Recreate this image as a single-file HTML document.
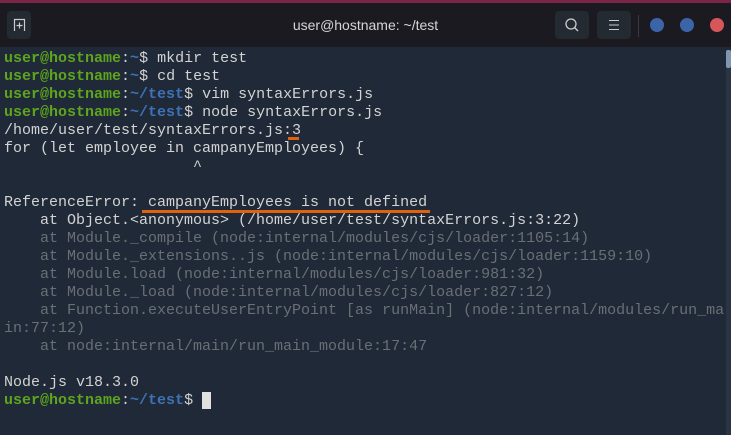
<!DOCTYPE html><html><head><style>
body{margin:0;width:731px;height:435px;overflow:hidden;background:#1f2937;font-family:"Liberation Mono",monospace}
.top{position:absolute;left:0;top:0;width:731px;height:4px;background:#7a2448}
.tb{position:absolute;left:0;top:3px;width:731px;height:44px;background:#1b1a21}
.btn{position:absolute;top:8px;height:28px;background:#232a31;border-radius:4px}
.title{position:absolute;left:0;width:731px;top:14px;text-align:center;color:#d6d6d6;font:14px "Liberation Sans",sans-serif}
.dot{position:absolute;top:15px;width:14px;height:14px;border-radius:50%}
.term{position:absolute;left:4px;top:50px;font-size:15px;line-height:18px;color:#d3d3d3;white-space:pre}
.g{color:#5ea51e;font-weight:bold}.b{color:#3e72b4;font-weight:bold}.d{color:#6a6f76}
.ul{position:absolute;height:3px;background:#e0620f}
</style></head><body>
<div class="top"></div>
<div class="tb">
<div class="btn" style="left:7px;width:24px"></div>
<svg style="position:absolute;left:13px;top:15px" width="13" height="14"><path d="M1.5 13V1.5H11.5V13M6.5 4.5V10.5M3.5 7.5H9.5" stroke="#ccc" stroke-width="1.2" fill="none"/></svg>
<div class="title">user@hostname: ~/test</div>
<div class="btn" style="left:555px;width:34px"></div>
<svg style="position:absolute;left:564px;top:14px" width="16" height="16"><circle cx="7" cy="7" r="5" stroke="#ccc" stroke-width="1.3" fill="none"/><path d="M10.5 10.5L14 14" stroke="#ccc" stroke-width="1.3"/></svg>
<div class="btn" style="left:597px;width:34px"></div>
<svg style="position:absolute;left:608px;top:16px" width="12" height="12"><path d="M1 1.5H11M1 6H11M1 10.5H11" stroke="#ccc" stroke-width="1.1"/></svg>
<div style="position:absolute;left:638px;top:12px;width:1px;height:22px;background:#3a3a40"></div>
<div class="dot" style="left:650px;background:#3b65a8"></div>
<div class="dot" style="left:680px;background:#3b65a8"></div>
<div class="dot" style="left:710px;background:#d5575a"></div>
</div>
<div style="position:absolute;left:726px;top:50px;width:5px;height:385px;background:#2a3442"></div>
<div style="position:absolute;left:726px;top:50px;width:5px;height:18px;background:#7f95b0;border-radius:2px"></div>
<div class="term"><span class="g">user@hostname</span>:<span class="b">~</span>$ mkdir test
<span class="g">user@hostname</span>:<span class="b">~</span>$ cd test
<span class="g">user@hostname</span>:<span class="b">~/test</span>$ vim syntaxErrors.js
<span class="g">user@hostname</span>:<span class="b">~/test</span>$ node syntaxErrors.js
/home/user/test/syntaxErrors.js:3
for (let employee in campanyEmployees) {
                     ^

ReferenceError: campanyEmployees is not defined
    at Object.&lt;anonymous&gt; (/home/user/test/syntaxErrors.js:3:22)
<span class="d">    at Module._compile (node:internal/modules/cjs/loader:1105:14)
    at Module._extensions..js (node:internal/modules/cjs/loader:1159:10)
    at Module.load (node:internal/modules/cjs/loader:981:32)
    at Module._load (node:internal/modules/cjs/loader:827:12)
    at Function.executeUserEntryPoint [as runMain] (node:internal/modules/run_ma
in:77:12)
    at node:internal/main/run_main_module:17:47</span>

Node.js v18.3.0
<span class="g">user@hostname</span>:<span class="b">~/test</span>$ <span style="background:#e0e0e0"> </span></div>
<div class="ul" style="left:288px;top:137px;width:11px"></div>
<div class="ul" style="left:142px;top:210px;width:288px"></div>
</body></html>
